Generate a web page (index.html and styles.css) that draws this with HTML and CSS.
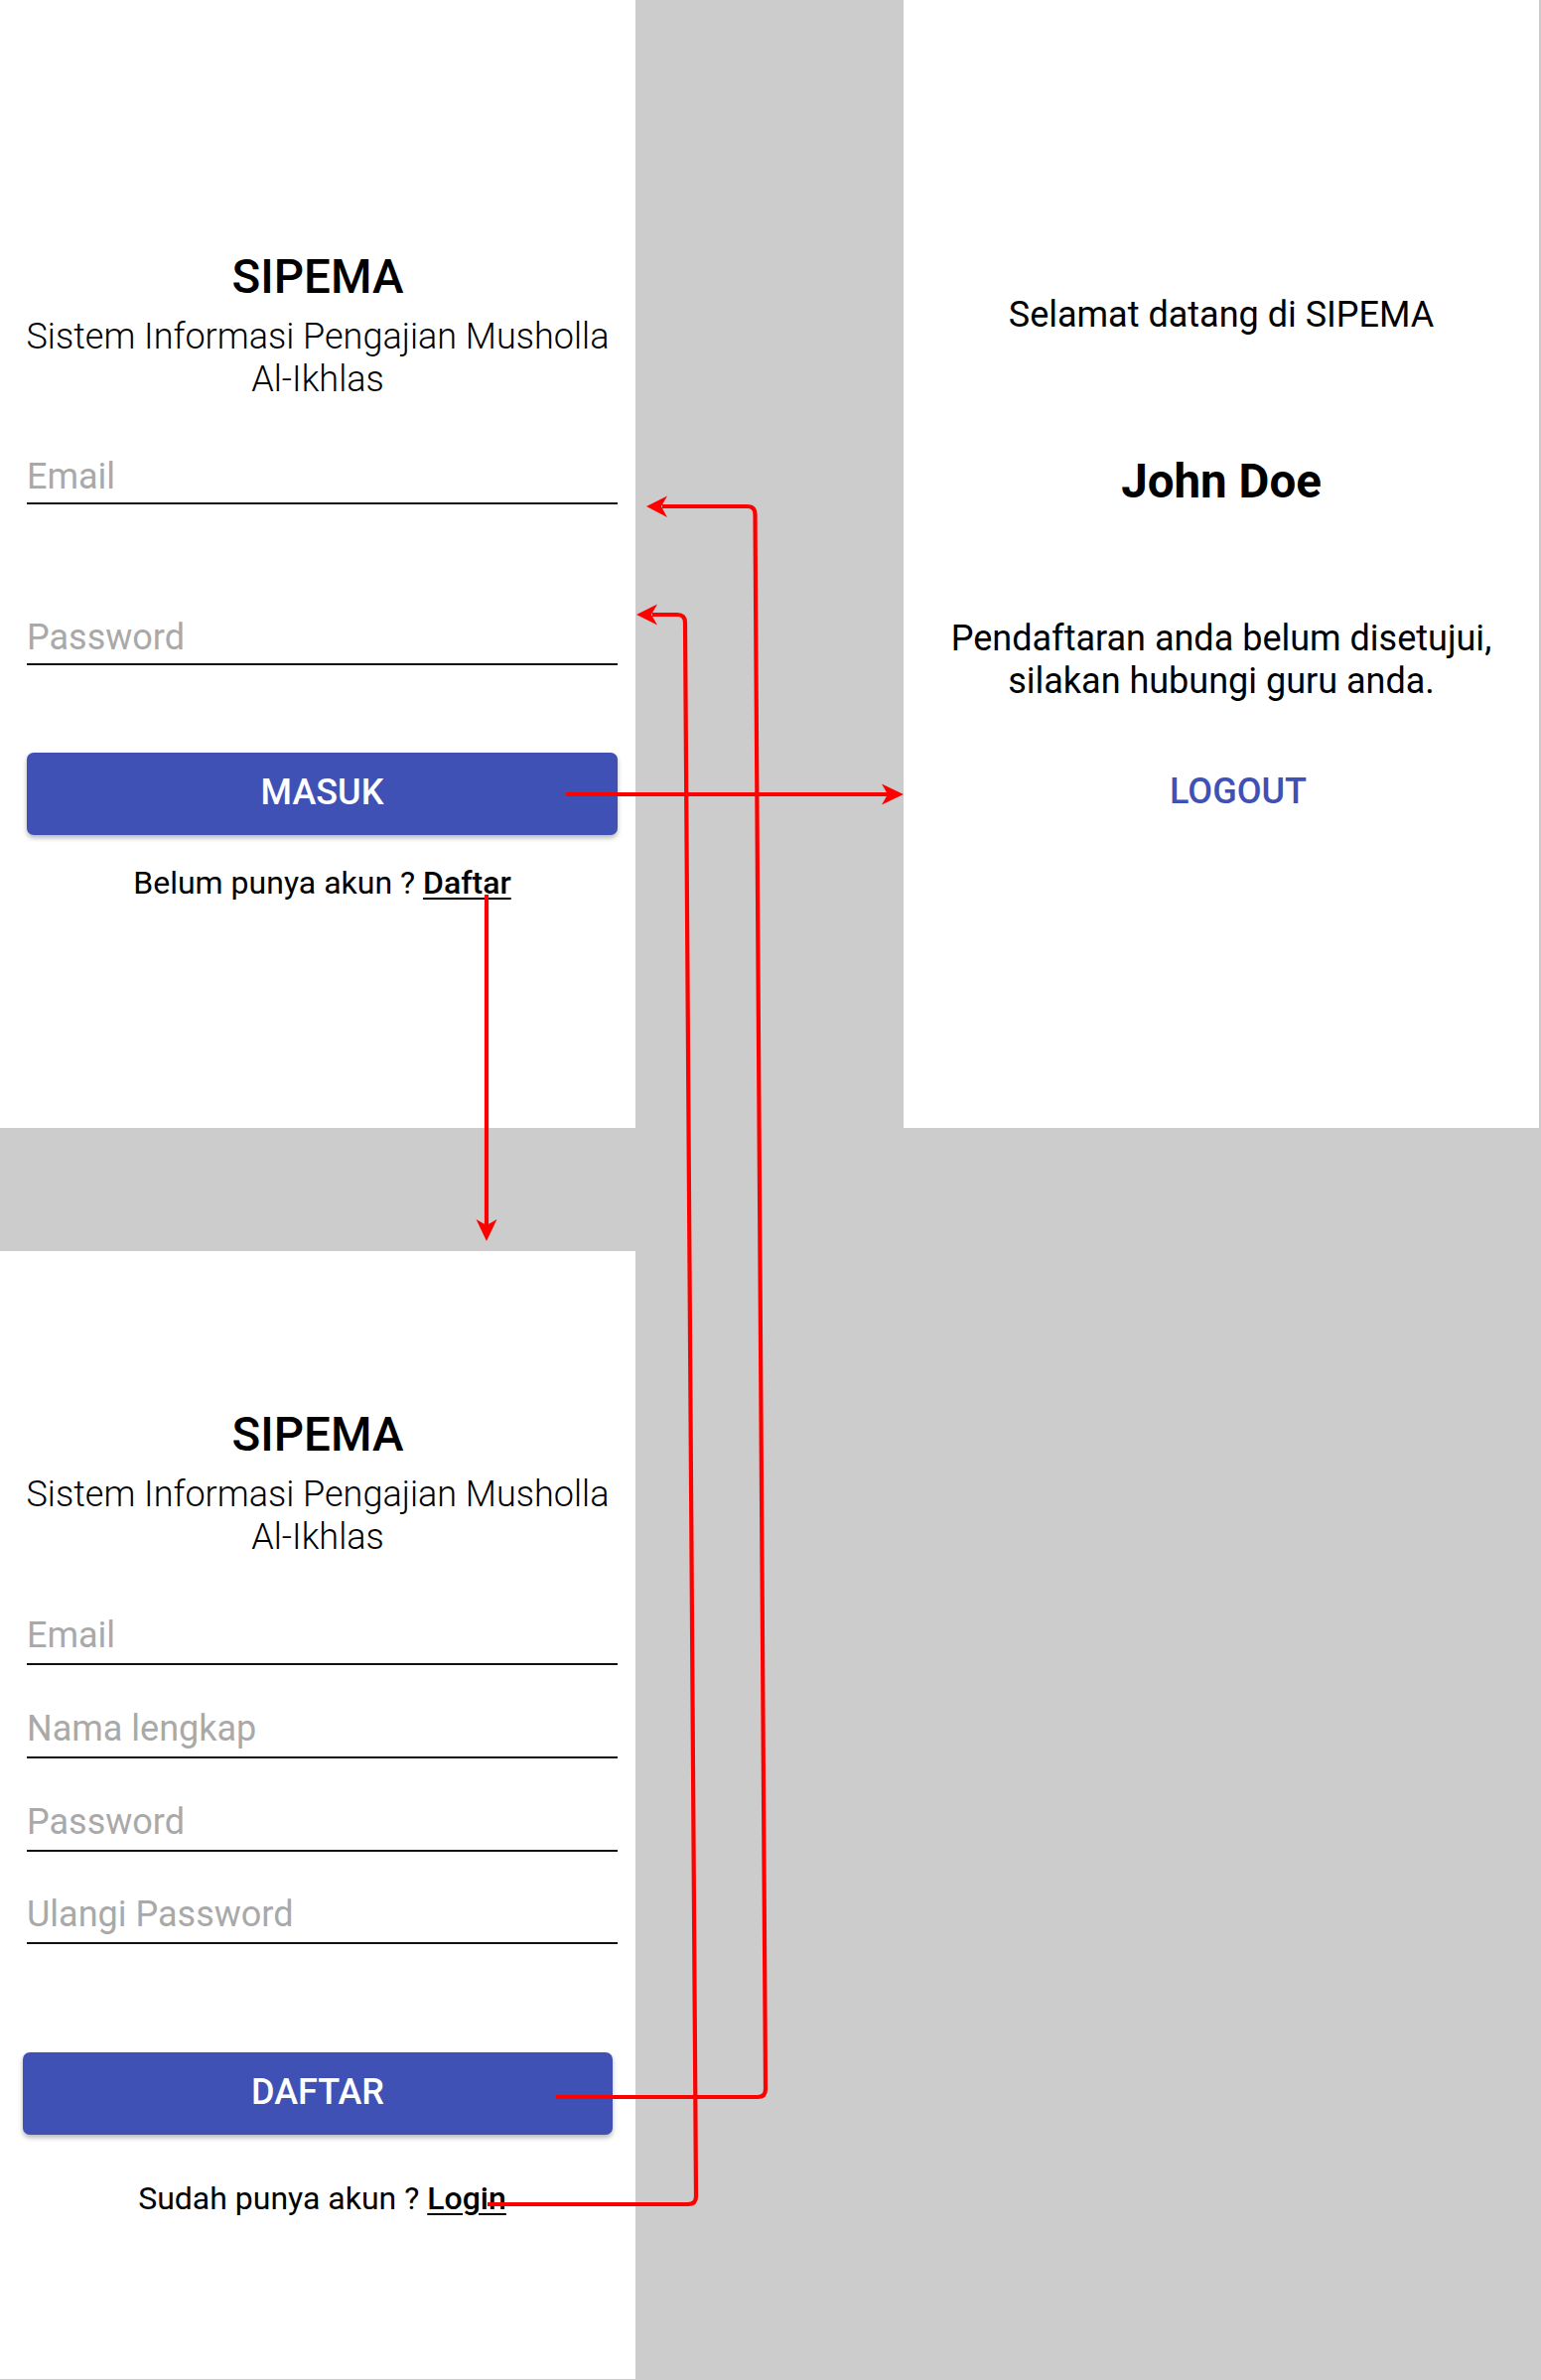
FILE: index.html
```html
<!DOCTYPE html>
<html lang="id">
<head>
<meta charset="utf-8">
<title>SIPEMA – alur layar</title>
<link rel="stylesheet" href="styles.css">
</head>
<body>
<div class="board">
  <section class="screen login">
    <h1 class="title">SIPEMA</h1>
    <p class="subtitle">Sistem Informasi Pengajian Musholla<br>Al-Ikhlas</p>
    <div class="field first"><span class="hint">Email</span></div>
    <div class="field wide-gap"><span class="hint">Password</span></div>
    <button class="btn">MASUK</button>
    <p class="switch">Belum punya akun ? <a class="link">Daftar</a></p>
  </section>

  <section class="screen welcome">
    <p class="greet">Selamat datang di SIPEMA</p>
    <h2 class="name">John Doe</h2>
    <p class="note">Pendaftaran anda belum disetujui,<br>silakan hubungi guru anda.</p>
    <p class="logout">LOGOUT</p>
  </section>

  <section class="screen register">
    <h1 class="title">SIPEMA</h1>
    <p class="subtitle">Sistem Informasi Pengajian Musholla<br>Al-Ikhlas</p>
    <div class="field first"><span class="hint">Email</span></div>
    <div class="field"><span class="hint">Nama lengkap</span></div>
    <div class="field"><span class="hint">Password</span></div>
    <div class="field"><span class="hint">Ulangi Password</span></div>
    <button class="btn">DAFTAR</button>
    <p class="switch">Sudah punya akun ? <a class="link">Login</a></p>
  </section>

  <svg class="flow" width="1550" height="2396" viewBox="0 0 1550 2396" aria-hidden="true">
    <g fill="none" stroke="#ff0000" stroke-width="4.2" stroke-linejoin="round">
      <path d="M570 800 H896"/>
      <path d="M490 901 V1236"/>
      <path d="M560 2112 H763 Q771 2112 771 2104 L760.5 518 Q760.5 510 752.5 510 H667"/>
      <path d="M491 2220 H693 Q701 2220 701 2212 L690 627 Q690 619 682 619 H657"/>
    </g>
    <g fill="#ff0000">
      <polygon points="910,800 888,789.5 894,800 888,810.5"/>
      <polygon points="490,1250 479.5,1228 490,1234 500.5,1228"/>
      <polygon points="651,510 672,499.5 666,510 672,521"/>
      <polygon points="641,619 662,608.5 656,619 662,629.5"/>
    </g>
  </svg>
</div>
</body>
</html>
```
FILE: styles.css
```css
html, body {
  margin: 0;
  padding: 0;
}

body {
  background: #cccccc;
  min-height: 2397px;
  font-family: Roboto, "Noto Sans", "Liberation Sans", sans-serif;
  color: #000;
}

.board {
  position: relative;
  display: grid;
  grid-template-columns: 640px 640px;
  grid-template-rows: 1136px 1136px;
  column-gap: 270px;
  row-gap: 124px;
  width: 1550px;
}

.screen {
  background: #ffffff;
  display: flex;
  flex-direction: column;
  box-sizing: border-box;
}

.login { padding-top: 251px; }
.register {
  grid-column: 1;
  grid-row: 2;
  padding-top: 157px;
}
.welcome {
  padding-top: 295.5px;
  align-items: center;
  text-align: center;
}

.title {
  margin: 0;
  font-size: 47.5px;
  line-height: 56px;
  font-weight: 500;
  text-align: center;
}

.subtitle {
  margin: 11px 0 0;
  font-size: 36px;
  line-height: 43px;
  font-weight: 300;
  text-align: center;
}

.field {
  margin: 42.8px 18px 0 27px;
  line-height: 43px;
  font-size: 36px;
  padding-bottom: 6px;
  border-bottom: 2px solid #111;
}
.login .field.first {
  margin-top: 54.5px;
  padding-bottom: 4.5px;
}
.register .field.first { margin-top: 56px; }
.field.wide-gap {
  margin-top: 112.5px;
  padding-bottom: 4.5px;
}

.hint {
  color: #a9a9a9;
  font-weight: 400;
}

.btn {
  margin: 88px 18px 0 27px;
  height: 83px;
  border: none;
  border-radius: 7px;
  background: #3f51b5;
  color: #ffffff;
  font-family: inherit;
  font-size: 36px;
  font-weight: 500;
  box-shadow: 0 3px 5px rgba(0, 0, 0, 0.28);
  padding: 0 0 4px;
}
.register .btn {
  margin: 108.6px 23px 0 23px;
  padding: 0 0 2px;
}

.switch {
  margin: 28.5px 18px 0 27px;
  font-size: 32px;
  line-height: 38px;
  text-align: center;
}
.register .switch { margin-top: 45px; }

.link {
  font-weight: 500;
  text-decoration: underline;
  text-decoration-thickness: 2px;
  text-underline-offset: 4px;
}

.greet {
  margin: 0;
  font-size: 36px;
  line-height: 43px;
}

.name {
  margin: 118.7px 0 0;
  font-size: 47.5px;
  line-height: 56px;
  font-weight: 700;
}

.note {
  margin: 108.5px 0 0;
  font-size: 36px;
  line-height: 43px;
}

.logout {
  margin: 68.5px 0 0;
  padding-left: 34px;
  font-size: 36px;
  line-height: 43px;
  font-weight: 500;
  color: #3f51b5;
}

.flow {
  position: absolute;
  left: 0;
  top: 0;
  pointer-events: none;
  overflow: visible;
}
```
